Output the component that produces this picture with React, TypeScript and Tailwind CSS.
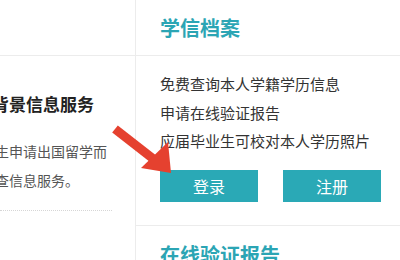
const font = { fontFamily: '"Noto Sans CJK SC", "Noto Sans", sans-serif' };

function Arrow() {
  return (
    <svg
      className="pointer-events-none absolute left-0 top-0"
      width="400"
      height="260"
      viewBox="0 0 400 260"
    >
      <polygon
        points="117.8,125.5 112.2,132.5 153.2,164.5 158.8,157.5"
        fill="#e5412f"
      />
      <polygon points="141,168 168,142 171,173" fill="#e5412f" />
    </svg>
  );
}

export default function App() {
  return (
    <div
      className="relative flex h-[260px] w-[400px] overflow-hidden bg-white"
      style={font}
    >
      <div className="flex w-[136px] shrink-0 flex-col overflow-hidden border-r border-[#ececec]">
        <div className="h-[56px] shrink-0 border-b border-[#ececec]" />
        <div className="pt-[36px]">
          <h3 className="ml-[-8px] whitespace-nowrap text-[17px] font-bold leading-[24px] text-[#222]">
            背景信息服务
          </h3>
          <p className="ml-[-5px] mt-[21px] whitespace-nowrap text-[14px] leading-[29px] text-[#555]">
            生申请出国留学而
            <br />
            查信息服务。
          </p>
          <div className="mt-[15px] w-[112px] border-t border-dotted border-[#d6d6d6]" />
        </div>
      </div>

      <div className="flex flex-1 flex-col">
        <div className="flex h-[56px] shrink-0 items-center border-b border-[#ececec] pl-[24px]">
          <h2 className="text-[20px] font-bold leading-[28px] text-[#2ba5b4]">
            学信档案
          </h2>
        </div>
        <div className="border-b border-[#ececec] pb-[23px] pl-[24px] pt-[14px]">
          <ul className="whitespace-nowrap text-[15px] leading-[28.5px] text-[#333]">
            <li>免费查询本人学籍学历信息</li>
            <li>申请在线验证报告</li>
            <li>应届毕业生可校对本人学历照片</li>
          </ul>
          <div className="mt-[14px] flex gap-[25px]">
            <button className="h-[32px] w-[98px] bg-[#2aa9b6] text-[16px] text-white">
              登录
            </button>
            <button className="h-[32px] w-[98px] bg-[#2aa9b6] text-[16px] text-white">
              注册
            </button>
          </div>
        </div>
        <div className="pl-[24px] pt-[15px]">
          <h2 className="whitespace-nowrap text-[20px] font-bold leading-[28px] text-[#2ba5b4]">
            在线验证报告
          </h2>
        </div>
      </div>

      <Arrow />
    </div>
  );
}
